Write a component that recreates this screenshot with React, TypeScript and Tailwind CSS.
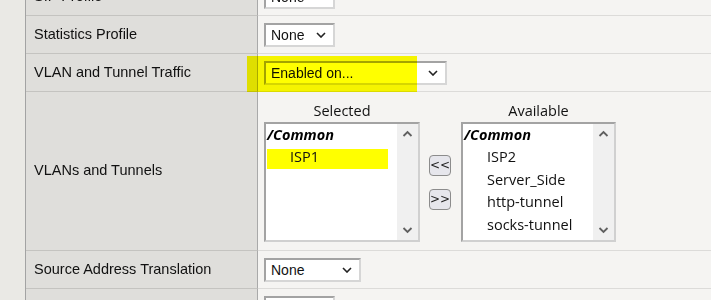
import React from "react";

const Chevron = () => (
  <svg width="10" height="6" viewBox="0 0 10 6" className="shrink-0">
    <path d="M1 1 L5 5 L9 1" fill="none" stroke="#222" strokeWidth="1.6" />
  </svg>
);

const Sel = ({ text, w }: { text: string; w: string }) => (
  <div
    className={`${w} h-[24px] flex items-center justify-between bg-white border-2 border-t-[#a3a3a3] border-l-[#a3a3a3] border-r-[#d6d6d6] border-b-[#d6d6d6] pl-[5px] pr-[7px] text-[14px] text-[#111]`}
    style={{ fontFamily: '"Liberation Sans", Arial, sans-serif' }}
  >
    <span className="leading-none">{text}</span>
    <Chevron />
  </div>
);

const ScrollChevron = ({ up }: { up?: boolean }) => (
  <svg width="11" height="7" viewBox="0 0 11 7">
    <path
      d={up ? "M1.5 6 L5.5 2 L9.5 6" : "M1.5 1 L5.5 5 L9.5 1"}
      fill="none"
      stroke="#606060"
      strokeWidth="1.8"
    />
  </svg>
);

const ListBox = ({
  title,
  w,
  children,
}: {
  title: string;
  w: string;
  children: React.ReactNode;
}) => (
  <div className={`${w} flex flex-col`}>
    <div className="h-[20px] leading-[20px] text-center text-[14.5px] text-[#111]">{title}</div>
    <div className="mt-[1px] h-[120px] flex bg-white border-2 border-t-[#a3a3a3] border-l-[#a3a3a3] border-r-[#d0d0d0] border-b-[#d0d0d0]">
      <div className="flex-1 flex flex-col">{children}</div>
      <div className="w-[21px] bg-[#f0f0f0] flex flex-col items-center justify-between pt-[6px] pb-[6px]">
        <ScrollChevron up />
        <ScrollChevron />
      </div>
    </div>
  </div>
);

const Group = () => (
  <div className="h-[22px] leading-[22px] pl-[1px] font-bold italic text-[14.5px] text-black">/Common</div>
);

const Row = ({
  label,
  h,
  children,
  extra,
}: {
  label: string;
  h: string;
  children?: React.ReactNode;
  extra?: React.ReactNode;
}) => (
  <div className={`flex ${h} shrink-0`}>
    <div className="w-[232px] shrink-0 bg-[#dfdedb] border-r border-r-[#a9a9a9] border-b border-b-[#c4c3c0] pl-2 flex items-center text-[14.5px] text-[#111]">
      {label}
    </div>
    <div className="relative flex-1 border-b border-b-[#dcdbd9] flex items-center pl-[6px]">
      {children}
      {extra}
    </div>
  </div>
);

export default function App() {
  return (
    <div
      className="w-[711px] h-[300px] overflow-hidden flex bg-[#f5f4f2]"
      style={{ fontFamily: '"Liberation Sans", Arial, sans-serif' }}
    >
      <div className="w-[26px] shrink-0 bg-[#eae9e5] border-r border-r-[#a3a3a3]" />
      <div className="flex-1 flex flex-col mt-[-22px]">
        <Row label="SIP Profile" h="h-[38px]">
          <Sel text="None" w="w-[71px]" />
        </Row>
        <Row label="Statistics Profile" h="h-[38px]">
          <Sel text="None" w="w-[71px]" />
        </Row>
        <Row
          label="VLAN and Tunnel Traffic"
          h="h-[38px]"
          extra={
            <div className="absolute left-[-11px] top-[2px] w-[170px] h-[36px] bg-[#ffff00] mix-blend-multiply" />
          }
        >
          <Sel text="Enabled on..." w="w-[183px]" />
        </Row>
        <Row label="VLANs and Tunnels" h="h-[159px]">
          <div
            className="self-start pt-[9px] flex items-center"
            style={{ fontFamily: '"Open Sans", "Noto Sans", sans-serif' }}
          >
            <ListBox title="Selected" w="w-[156px]">
              <Group />
              <div className="mt-[3px] ml-[1px] w-[121px] h-[20px] bg-[#ffff00] pl-[23px] leading-[15px] text-[14.5px] text-[#111]">
                ISP1
              </div>
            </ListBox>
            <div className="ml-[9px] mr-[10px] mt-[21px] flex flex-col gap-[13px]">
              {["<<", ">>"].map((t) => (
                <div
                  key={t}
                  className="w-[22px] h-[21px] rounded-[4px] border border-[#8c8c8c] bg-[#e6e6ec] flex items-center justify-center text-[12px] leading-none text-[#222]"
                  style={{ fontFamily: '"DejaVu Sans", sans-serif' }}
                >
                  {t}
                </div>
              ))}
            </div>
            <ListBox title="Available" w="w-[155px]">
              <Group />
              {["ISP2", "Server_Side", "http-tunnel", "socks-tunnel"].map((t) => (
                <div key={t} className="h-[22.7px] leading-[22.7px] pl-[24px] text-[14.5px] text-[#111]">
                  {t}
                </div>
              ))}
            </ListBox>
          </div>
        </Row>
        <Row label="Source Address Translation" h="h-[38px]">
          <Sel text="None" w="w-[97px]" />
        </Row>
        <Row label="" h="h-[38px]">
          <Sel text="" w="w-[71px]" />
        </Row>
      </div>
    </div>
  );
}
